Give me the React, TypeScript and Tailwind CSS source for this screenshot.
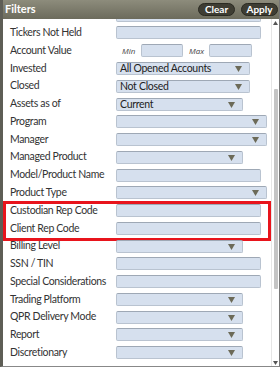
import React from "react";

type Row =
  | { label: string; kind: "text"; w: number }
  | { label: string; kind: "select"; w: number; value?: string }
  | { label: string; kind: "minmax" };

const rows: Row[] = [
  { label: "Tickers Not Held", kind: "text", w: 145 },
  { label: "Account Value", kind: "minmax" },
  { label: "Invested", kind: "select", w: 134, value: "All Opened Accounts" },
  { label: "Closed", kind: "select", w: 134, value: "Not Closed" },
  { label: "Assets as of", kind: "select", w: 127, value: "Current" },
  { label: "Program", kind: "select", w: 151 },
  { label: "Manager", kind: "select", w: 151 },
  { label: "Managed Product", kind: "select", w: 127 },
  { label: "Model/Product Name", kind: "text", w: 145 },
  { label: "Product Type", kind: "select", w: 151 },
  { label: "Custodian Rep Code", kind: "text", w: 145 },
  { label: "Client Rep Code", kind: "text", w: 145 },
  { label: "Billing Level", kind: "select", w: 127 },
  { label: "SSN / TIN", kind: "text", w: 145 },
  { label: "Special Considerations", kind: "text", w: 145 },
  { label: "Trading Platform", kind: "select", w: 127 },
  { label: "QPR Delivery Mode", kind: "select", w: 127 },
  { label: "Report", kind: "select", w: 127 },
  { label: "Discretionary", kind: "select", w: 127 },
];

function Box({ w, children }: { w: number; children?: React.ReactNode }) {
  return (
    <div
      className="relative h-[13px] rounded-[2px] border border-[#b9c3d0] border-t-[#9ea8b5] bg-[#d6e0ee] flex items-center pl-[3px] text-[10.5px] tracking-[-0.3px] leading-none text-[#222]"
      style={{ width: w }}
    >
      {children}
    </div>
  );
}

function Arrow() {
  return (
    <svg className="absolute right-[7px] top-[3px]" width="7" height="6" viewBox="0 0 7 6">
      <polygon points="0,0 7,0 3.5,6" fill="#6c6a58" />
    </svg>
  );
}

function RowView({ r }: { r: Row }) {
  return (
    <div className="h-[17.78px] flex items-center">
      <div className="w-[113px] pl-[7px] text-[10.5px] tracking-[-0.35px] text-[#333] whitespace-nowrap">{r.label}</div>
      {r.kind === "text" && <Box w={r.w} />}
      {r.kind === "select" && (
        <Box w={r.w}>
          {r.value}
          <Arrow />
        </Box>
      )}
      {r.kind === "minmax" && (
        <div className="flex items-center">
          <span
            className="w-[25px] pl-[6px] italic text-[8px] text-[#444]"
            style={{ fontFamily: "'Open Sans', sans-serif" }}
          >
            Min
          </span>
          <Box w={42} />
          <span
            className="w-[26px] pl-[6px] italic text-[8px] text-[#444]"
            style={{ fontFamily: "'Open Sans', sans-serif" }}
          >
            Max
          </span>
          <Box w={43} />
        </div>
      )}
    </div>
  );
}

export default function App() {
  const before = rows.slice(0, 10);
  const boxed = rows.slice(10, 12);
  const after = rows.slice(12);
  return (
    <div
      className="w-[280px] h-[367px] overflow-hidden bg-white flex flex-col border-l-[3px] border-l-[#5e5e56] border-r border-r-[#777] border-b border-b-[#888]"
      style={{ fontFamily: "Lato, 'Open Sans', sans-serif" }}
    >
      <div className="h-[19px] shrink-0 flex items-center justify-between bg-gradient-to-b from-[#8d8c7c] to-[#6c6b5c] pl-[1px] pr-[1px] -ml-[3px]">
        <span className="pl-[4px] text-[11px] font-bold text-white">Filters</span>
        <div className="flex gap-[6px]">
          <span className="h-[13px] w-[37px] rounded-full bg-[#3e3d33] text-white text-[10px] font-bold flex items-center justify-center border border-[#2a2a22]">
            Clear
          </span>
          <span className="h-[13px] w-[37px] rounded-full bg-[#3e3d33] text-white text-[10px] font-bold flex items-center justify-center border border-[#2a2a22]">
            Apply
          </span>
        </div>
      </div>
      <div className="flex-1 flex min-h-0">
        <div className="flex-1 overflow-hidden">
          <div className="-mt-[12.7px]">
            <div className="h-[17.78px] flex items-center">
              <div className="w-[113px]" />
              <Box w={145} />
            </div>
            {before.map((r) => (
              <RowView key={r.label} r={r} />
            ))}
            <div className="relative">
              {boxed.map((r) => (
                <RowView key={r.label} r={r} />
              ))}
              <div className="absolute -top-[1px] -bottom-[4px] left-0 right-[0px] border-[3px] border-[#e8141c] pointer-events-none" />
            </div>
            {after.map((r) => (
              <RowView key={r.label} r={r} />
            ))}
          </div>
        </div>
        <div className="w-[8px] shrink-0 flex flex-col items-center border-l border-l-[#e6e6e6]">
          <svg width="5" height="4" viewBox="0 0 5 4" className="mt-[2px]">
            <polygon points="2.5,0 5,4 0,4" fill="#555" />
          </svg>
          <div className="mt-[64px] h-[200px] w-[4px] bg-[#c4c4c4] rounded-[1px]" />
          <div className="flex-1" />
          <svg width="5" height="4" viewBox="0 0 5 4" className="mb-[1px]">
            <polygon points="0,0 5,0 2.5,4" fill="#555" />
          </svg>
        </div>
      </div>
    </div>
  );
}
